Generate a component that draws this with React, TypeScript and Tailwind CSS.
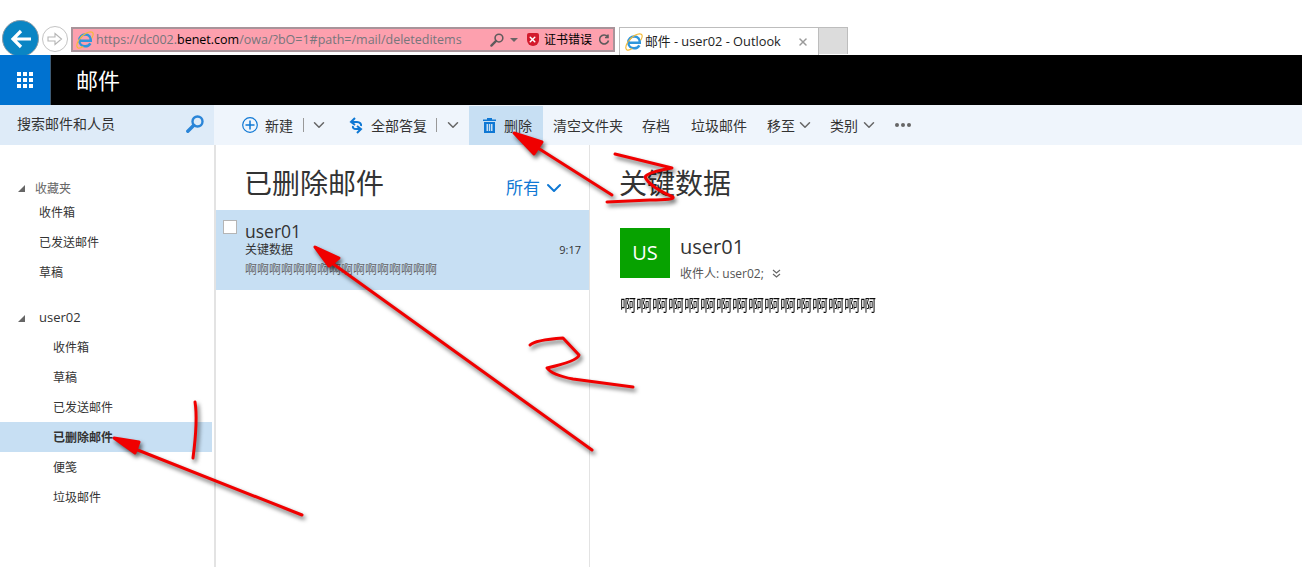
import { ChevronDown, X } from 'lucide-react'

const FONT = '"Open Sans", "Noto Sans CJK SC", sans-serif'

const favorites = ['收件箱', '已发送邮件', '草稿']
const folders = ['收件箱', '草稿', '已发送邮件', '已删除邮件', '便笺', '垃圾邮件']

const IeLogo = () => (
  <svg className="shrink-0" width="18" height="18" viewBox="0 0 18 18" fill="none">
    <path d="M4 9.800h10.800c.3-3.600-2.100-6.300-5.500-6.300-3.300 0-6 2.600-6 6s2.600 5.800 5.800 5.800c2.300 0 4.200-1 5.300-3" stroke="#2f96dc" strokeWidth="2.500" />
    <path d="M3.500 8.500C6.500 3.500 13.500-.5 16.300 1.300c1.400 1 .9 3.400-.6 6" stroke="#f4bb38" strokeWidth="1.200" />
    <path d="M3 8.500C1 12 .3 15.600 1.700 16.700c1.200.9 3.600.2 5.600-1.100" stroke="#f4bb38" strokeWidth="1.200" />
  </svg>
)

const Magnifier = ({ className, color, size, line }: { className: string; color: string; size: number; line: number }) => (
  <svg className={className} width={size} height={size} viewBox="0 0 18 18" fill="none" stroke={color}>
    <circle cx="11.500" cy="6.500" r="5" strokeWidth={line} />
    <path d="M7.800 10.200 1.800 16.200" strokeWidth={line + 1} strokeLinecap="round" />
  </svg>
)

const Chevron = ({ className }: { className: string }) => (
  <ChevronDown className={className} strokeWidth={2} />
)

function BrowserBar() {
  return (
    <div className="flex h-[55px] items-start overflow-hidden bg-white pl-[2px] pt-[20px]">
      <div className="flex h-[37px] w-[37px] shrink-0 items-center justify-center rounded-full border border-[#8a9aa5] bg-[#0a85c4]">
        <svg width="22" height="20" viewBox="0 0 22 20" fill="none" stroke="white" strokeWidth="3.200">
          <path d="M21 10H4M11 2l-8 8 8 8" />
        </svg>
      </div>
      <div className="ml-[3px] mt-[6px] flex h-[26px] w-[26px] shrink-0 items-center justify-center rounded-full border border-[#c4c4c4]">
        <svg width="16" height="14" viewBox="0 0 16 14" fill="none" stroke="#b5b5b5" strokeWidth="1.100">
          <path d="M1 5h7V1.500L14.500 7 8 12.500V9H1z" />
        </svg>
      </div>
      <div className="ml-[3px] mt-[7px] flex h-[25px] w-[544px] shrink-0 items-center border-2 border-[#a8949a] bg-[#fda0ae] pl-[3px] pr-[3px] text-[12.5px]">
        <IeLogo />
        <span className="ml-[2px] whitespace-nowrap pt-[1px] text-[#77767c]">
          https://dc002.<span className="text-black">benet.com</span>/owa/?bO=1#path=/mail/deleteditems
        </span>
        <Magnifier className="ml-auto" color="#5f5a5c" size={14} line={2} />
        <span className="ml-[6px] h-0 w-0 border-x-[4px] border-t-[4px] border-x-transparent border-t-[#6a6466]" />
        <span className="ml-[9px] flex h-[13px] w-[12px] items-center justify-center rounded-b-[6px] rounded-t-[2px] bg-[#d3192c]">
          <X className="h-[9px] w-[9px] text-white" strokeWidth={4} />
        </span>
        <span className="ml-[5px] whitespace-nowrap text-[12px] text-black">证书错误</span>
        <svg className="ml-[6px]" width="12" height="12" viewBox="0 0 12 12" fill="none" stroke="#5f5a5c" strokeWidth="1.600">
          <path d="M9.500 2.500A4.500 4.500 0 1 0 10.500 6.500M10 .5v3H7" />
        </svg>
      </div>
      <div className="ml-[4px] mt-[7px] flex h-[28px] w-[200px] shrink-0 items-center border border-b-0 border-[#bdbdbd] bg-white pl-[5px] pr-[9px] text-[12.8px] text-[#222]">
        <IeLogo />
        <span className="ml-[2px] whitespace-nowrap pt-[1px]">邮件 - user02 - Outlook</span>
        <X className="ml-auto h-[12px] w-[12px] text-[#9a9a9a]" strokeWidth={3} />
      </div>
      <div className="mt-[7px] h-[27px] w-[29px] shrink-0 border border-l-0 border-b-0 border-[#bdbdbd] bg-[#dcdcdc]" />
    </div>
  )
}

function AppBar() {
  return (
    <div className="flex h-[50px] bg-black">
      <div className="flex w-[51px] items-center justify-center border-r border-[#3c5a75] bg-[#0072d0]">
        <div className="grid grid-cols-3 gap-[2px]">
          {Array.from({ length: 9 }).map((_, i) => (
            <span key={i} className="h-[4px] w-[4px] bg-white" />
          ))}
        </div>
      </div>
      <div className="ml-[25px] flex items-center text-[22px] text-white">邮件</div>
    </div>
  )
}

function ToolText({ label, className }: { label: string; className: string }) {
  return <span className={`whitespace-nowrap text-[14px] text-[#333] ${className}`}>{label}</span>
}

function Toolbar() {
  return (
    <div className="flex h-[40px]">
      <div className="flex w-[214px] items-center justify-between bg-[#deebf8] pb-[3px] pl-[17px] pr-[10px] text-[14px] text-[#333]">
        <span>搜索邮件和人员</span>
        <Magnifier className="mt-[1px]" color="#2a85d8" size={18} line={2.400} />
      </div>
      <div className="flex flex-1 items-center bg-[#eff5fc] pl-[28px]">
        <svg width="16" height="16" viewBox="0 0 16 16" fill="none" stroke="#0f78d4" strokeWidth="1.200">
          <circle cx="8" cy="8" r="7.300" />
          <path d="M8 3.500v9M3.500 8h9" strokeWidth="1.500" />
        </svg>
        <ToolText label="新建" className="ml-[7px]" />
        <span className="ml-[10px] h-[14px] w-px bg-[#999]" />
        <Chevron className="ml-[6px] h-[18px] w-[18px] text-[#666]" />
        <svg className="ml-[21px]" width="14" height="17" viewBox="0 0 14 17" fill="none" stroke="#0f78d4" strokeWidth="2">
          <path d="M6 1 2 5l4 3M2 5h6c3 0 4.500 2 4 4M8 16l4-4-4-3M12 12H7c-2.500 0-3.500-1.500-3-3" />
        </svg>
        <ToolText label="全部答复" className="ml-[8px]" />
        <span className="ml-[9px] h-[14px] w-px bg-[#999]" />
        <Chevron className="ml-[7px] h-[18px] w-[18px] text-[#666]" />
        <div className="ml-[7px] flex h-[39px] w-[74px] items-center self-end bg-[#c7dff3] pl-[14px]">
          <svg width="13" height="15" viewBox="0 0 13 15" fill="#0f78d4">
            <path d="M4 0h5v1.500h4V3H0V1.500h4zM1 4h11v11H1zM3.500 6v7H5V6zm2.300 0v7h1.400V6zM8 6v7h1.500V6z" fillRule="evenodd" />
          </svg>
          <ToolText label="删除" className="ml-[8px]" />
        </div>
        <ToolText label="清空文件夹" className="ml-[10px]" />
        <ToolText label="存档" className="ml-[19px]" />
        <ToolText label="垃圾邮件" className="ml-[21px]" />
        <ToolText label="移至" className="ml-[20px]" />
        <Chevron className="ml-[1px] h-[18px] w-[18px] text-[#666]" />
        <ToolText label="类别" className="ml-[16px]" />
        <Chevron className="ml-[2px] h-[18px] w-[18px] text-[#666]" />
        <div className="ml-[17px] flex gap-[2px]">
          <span className="h-[4px] w-[4px] rounded-full bg-[#666]" />
          <span className="h-[4px] w-[4px] rounded-full bg-[#666]" />
          <span className="h-[4px] w-[4px] rounded-full bg-[#666]" />
        </div>
      </div>
    </div>
  )
}

function NavHeader({ label, className }: { label: string; className: string }) {
  return (
    <div className={`flex items-center pl-[18px] ${className}`}>
      <span className="h-0 w-0 border-b-[7px] border-l-[7px] border-b-[#666] border-l-transparent" />
      <span>{label}</span>
    </div>
  )
}

function Sidebar() {
  return (
    <div className="w-[216px] shrink-0 border-r-2 border-[#e3e3e3] pr-[2px] pt-[34px] text-[12px] text-[#333]">
      <NavHeader label="收藏夹" className="h-[19px] gap-[10px] text-[#666]" />
      {favorites.map((name) => (
        <div key={name} className="flex h-[30px] items-center pl-[39px]">{name}</div>
      ))}
      <div className="h-[14px]" />
      <NavHeader label="user02" className="h-[30px] gap-[14px] pt-[2px] text-[13px]" />
      {folders.map((name) => {
        const active = name === '已删除邮件'
        return (
          <div key={name} className={`flex h-[30px] items-center pl-[53px] pt-[2px] ${active ? 'bg-[#c7dff3] font-bold' : ''}`}>
            {name}
          </div>
        )
      })}
    </div>
  )
}

function MessageList() {
  return (
    <div className="w-[374px] shrink-0 border-r border-[#e3e3e3]">
      <div className="flex h-[65px] items-center pl-[28px] pr-[23px]">
        <span className="mt-[10px] text-[28px] leading-none text-[#333]">已删除邮件</span>
        <span className="ml-auto mt-[20px] text-[17px] text-[#0f78d4]">所有</span>
        <Chevron className="ml-[2px] mt-[20px] h-[24px] w-[24px] text-[#0f78d4]" />
      </div>
      <div className="relative h-[80px] bg-[#c7dff3] pl-[29px] pt-[9px] text-[#333]">
        <span className="absolute left-[7px] top-[10px] h-[14px] w-[14px] border border-[#b5b5b5] bg-white" />
        <div className="text-[17.5px] leading-[24px]">user01</div>
        <div className="-mt-[2px] flex items-center justify-between pr-[8px] text-[12px] leading-[18px]">
          <span>关键数据</span>
          <span className="text-[11px]">9:17</span>
        </div>
        <div className="mt-[2px] text-[12px] leading-[18px] text-[#666]">啊啊啊啊啊啊啊啊啊啊啊啊啊啊啊啊</div>
      </div>
    </div>
  )
}

function ReadingPane() {
  return (
    <div className="flex-1 pl-[30px] pt-[19px] text-[#333]">
      <div className="-ml-[1px] text-[28px] leading-[38px]">关键数据</div>
      <div className="mt-[26px] flex">
        <div className="flex h-[50px] w-[50px] items-center justify-center bg-[#07a200] text-[20px] text-white">US</div>
        <div className="ml-[10px]">
          <div className="text-[20px] leading-[38px]">user01</div>
          <div className="flex h-[16px] items-center whitespace-nowrap text-[12px] text-[#555]">
            <span>收件人: user02;</span>
            <svg className="ml-[8px]" width="9" height="10" viewBox="0 0 9 10" fill="none" stroke="#666" strokeWidth="1.200">
              <path d="M1 1l3.500 3L8 1M1 5l3.500 3L8 5" />
            </svg>
          </div>
        </div>
      </div>
      <div className="mt-[13px] text-[16px] leading-[20px] text-black opacity-95">啊啊啊啊啊啊啊啊啊啊啊啊啊啊啊啊</div>
    </div>
  )
}

// the red marks someone drew on top of the screenshot
function Annotations() {
  return (
    <svg className="pointer-events-none absolute left-0 top-0 drop-shadow-[2px_3px_2px_rgba(0,0,0,0.6)]" width="1302" height="567" viewBox="0 0 1302 567" fill="none" stroke="#f00000" strokeWidth="3" strokeLinecap="round" strokeLinejoin="round">
      <path d="M302 515 125 445" />
      <path d="M114 438 139 442 135 453Z" fill="#f00000" />
      <path d="M195 402Q198 420 193 458" />
      <path d="M592 450 325 258" />
      <path d="M315 247 339 258 329 266Z" fill="#f00000" />
      <path d="M530 345Q535 340 563 338L579 355Q578 361 547 368Q552 375 573 379L633 387" />
      <path d="M612 195 530 143" />
      <path d="M514 133 542 142 534 154Z" fill="#f00000" />
      <path d="M615 154 672 168Q648 172 645 177Q650 187 673 197Q675 200 650 200L607 202" />
    </svg>
  )
}

export default function App() {
  return (
    <div className="relative h-[567px] w-[1302px] overflow-hidden bg-white" style={{ fontFamily: FONT }}>
      <BrowserBar />
      <AppBar />
      <Toolbar />
      <div className="flex h-[422px]">
        <Sidebar />
        <MessageList />
        <ReadingPane />
      </div>
      <Annotations />
    </div>
  )
}
